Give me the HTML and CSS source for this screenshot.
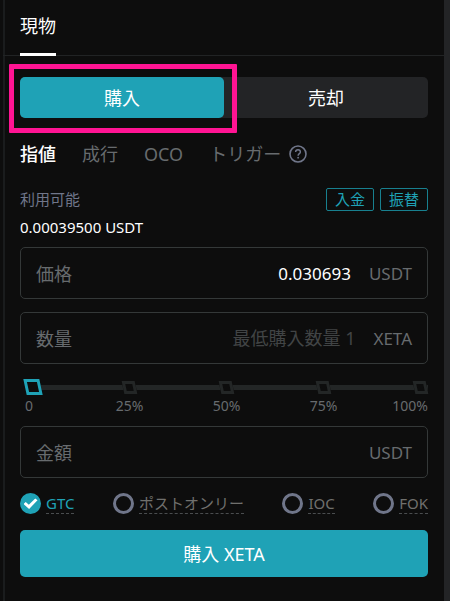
FILE: index.html
```html
<!DOCTYPE html>
<html lang="ja">
<head>
<meta charset="utf-8">
<meta name="viewport" content="width=device-width, initial-scale=1">
<title>現物</title>
<link rel="stylesheet" href="styles.css">
</head>
<body>
<main class="panel">
  <header class="panel-header">
    <h1 class="panel-title">現物</h1>
  </header>
  <form class="order">
    <div class="sides">
      <div class="side-slot">
        <button type="button" class="side side-buy">購入</button>
        <span class="highlight"></span>
      </div>
      <div class="side-slot">
        <button type="button" class="side">売却</button>
      </div>
    </div>

    <nav class="types">
      <button type="button" class="type type-active">指値</button>
      <button type="button" class="type">成行</button>
      <button type="button" class="type">OCO</button>
      <button type="button" class="type">トリガー</button>
      <button type="button" class="help" aria-label="ヘルプ">
        <svg class="help-icon" viewBox="0 0 18 18" fill="none" stroke="currentColor">
          <circle cx="9" cy="9" r="8" stroke-width="1.6"/>
          <path d="M6.6 7.1C6.6 5.6 7.6 4.7 9 4.7s2.4.9 2.4 2.2c0 1.7-2.3 1.8-2.3 3.8" stroke-width="1.4"/>
          <circle cx="9.1" cy="12.7" r=".9" fill="currentColor" stroke="none"/>
        </svg>
      </button>
    </nav>

    <div class="available">
      <span class="available-label">利用可能</span>
      <span class="available-actions">
        <button type="button" class="small-button">入金</button>
        <button type="button" class="small-button">振替</button>
      </span>
    </div>
    <p class="balance">0.00039500 USDT</p>

    <div class="field">
      <label class="field-label" for="price">価格</label>
      <input class="field-input" id="price" type="text" value="0.030693">
      <span class="field-unit">USDT</span>
    </div>
    <div class="field">
      <label class="field-label" for="quantity">数量</label>
      <input class="field-input" id="quantity" type="text" placeholder="最低購入数量 1">
      <span class="field-unit">XETA</span>
    </div>

    <div class="slider">
      <ul class="stops">
        <li class="stop"><i class="mark"></i><span class="stop-label">0</span></li>
        <li class="stop"><i class="mark"></i><span class="stop-label">25%</span></li>
        <li class="stop"><i class="mark"></i><span class="stop-label">50%</span></li>
        <li class="stop"><i class="mark"></i><span class="stop-label">75%</span></li>
        <li class="stop"><i class="mark"></i><span class="stop-label">100%</span></li>
      </ul>
      <input class="range" type="range" min="0" max="100" value="0" aria-label="数量の割合">
    </div>

    <div class="field">
      <label class="field-label" for="amount">金額</label>
      <input class="field-input" id="amount" type="text">
      <span class="field-unit">USDT</span>
    </div>

    <div class="options">
      <label class="option"><input class="radio" type="radio" name="tif" checked><span class="option-text">GTC</span></label>
      <label class="option"><input class="radio" type="radio" name="tif"><span class="option-text">ポストオンリー</span></label>
      <label class="option"><input class="radio" type="radio" name="tif"><span class="option-text">IOC</span></label>
      <label class="option"><input class="radio" type="radio" name="tif"><span class="option-text">FOK</span></label>
    </div>

    <button type="submit" class="submit">購入 XETA</button>
  </form>
</main>
</body>
</html>
```
FILE: styles.css
```css
:root {
  --bg: #0d0d0d;
  --surface: #232426;
  --line: #343838;
  --teal: #1fa2b6;
  --muted: #676b6e;
  --slate: #70768a;
}

* {
  box-sizing: border-box;
}

body {
  margin: 0;
  background: var(--surface);
  color: #fff;
  font-family: "Noto Sans", "Noto Sans CJK JP", sans-serif;
  font-size: 17px;
  line-height: 24px;
}

button,
input {
  margin: 0;
  padding: 0;
  border: 0;
  background: none;
  color: inherit;
  font: inherit;
}

.panel {
  min-height: 100vh;
  margin-right: 6px;
  border-left: 3px solid var(--bg);
  background: var(--bg);
  box-shadow: inset 2px 0 #1a1c1d;
}

.panel-header {
  display: flex;
  padding: 14px 16px 0 17px;
  border-bottom: 1px solid #212324;
}

.panel-title {
  margin: 0 0 -1px;
  padding-bottom: 15px;
  border-bottom: 3px solid #fff;
  font-size: 18px;
  font-weight: 400;
}

.order {
  display: flex;
  flex-direction: column;
  padding: 21px 16px 24px 17px;
}

.sides {
  display: grid;
  grid-template-columns: 1fr 1fr;
  border-radius: 5px;
  background: var(--surface);
}

.side-slot {
  position: relative;
}

.side {
  width: 100%;
  height: 41px;
  border-radius: 5px;
  font-size: 18px;
}

.side-buy {
  background: var(--teal);
}

.highlight {
  position: absolute;
  inset: -13px -13px -15px -11px;
  border: 5px solid #ff1493;
  border-radius: 1px;
  pointer-events: none;
}

.types {
  display: flex;
  align-items: center;
  gap: 26px;
  margin-top: 24px;
  color: var(--muted);
}

.type-active {
  color: #fff;
  font-weight: 500;
}

.type {
  font-size: 18px;
}

.help {
  display: flex;
  margin-left: -18px;
  color: var(--slate);
}

.help-icon {
  width: 18px;
  height: 18px;
}

.available {
  display: flex;
  align-items: center;
  justify-content: space-between;
  margin-top: 21px;
  color: var(--slate);
  font-size: 15px;
}

.available-actions {
  display: flex;
  gap: 6px;
}

.small-button {
  width: 48px;
  height: 23px;
  border: 1px solid #18808f;
  border-radius: 2px;
  color: var(--teal);
  line-height: 20px;
}

.balance {
  margin: 4px 0 8px;
  font-size: 15px;
}

.field {
  display: flex;
  align-items: center;
  height: 52px;
  padding: 2px 15px 0;
  border: 1px solid var(--line);
  border-radius: 5px;
  color: var(--muted);
}

.field + .field {
  margin-top: 13px;
}

.field-label {
  font-size: 18px;
}

.field-input {
  flex: 1;
  min-width: 0;
  padding: 0 18px;
  color: #fff;
  text-align: right;
}

.field-input::placeholder {
  color: #414445;
  font-size: 18px;
  opacity: 1;
}

.slider {
  display: grid;
  margin: 15px 0 10px;
}

.slider > * {
  grid-area: 1 / 1;
}

.stops {
  display: flex;
  justify-content: space-between;
  margin: 0;
  padding: 0 0 0 5px;
  list-style: none;
  color: var(--muted);
  font-size: 14px;
  line-height: 20px;
  background: linear-gradient(#232626, #232626) 10px 6px / 100% 5px no-repeat;
}

.stop {
  display: flex;
  flex-direction: column;
  align-items: center;
  gap: 2px;
  width: 15px;
}

.stop:first-child {
  align-items: flex-start;
}

.stop:last-child {
  align-items: flex-end;
}

.mark {
  width: 13px;
  height: 13px;
  margin: 2px 1px 0;
  border: 3px solid #232626;
  background: var(--bg);
  transform: skewX(12deg);
}

.range {
  width: 100%;
  height: 16px;
  padding: 0 0 0 5px;
  appearance: none;
  z-index: 1;
}

.range::-webkit-slider-thumb {
  width: 16px;
  height: 16px;
  appearance: none;
  border: 3px solid var(--teal);
  background: var(--bg);
  transform: skewX(12deg);
}

.options {
  display: flex;
  justify-content: space-between;
  margin: 15px 0 16px;
}

.option {
  display: flex;
  align-items: center;
  gap: 5px;
}

.radio {
  display: grid;
  place-items: center;
  width: 21px;
  height: 21px;
  appearance: none;
  border: 3px solid var(--slate);
  border-radius: 50%;
}

.radio:checked {
  border-color: var(--teal);
  background: var(--teal);
}

.radio:checked::before {
  content: "";
  width: 14px;
  height: 11px;
  background: #fff;
  clip-path: polygon(0 54%, 16% 37%, 38% 62%, 84% 4%, 100% 20%, 40% 100%);
}

.option-text {
  border-bottom: 1px dashed #4a4d4f;
  color: #70706d;
  font-size: 15px;
  line-height: 20px;
}

.radio:checked + .option-text {
  color: var(--teal);
}

.submit {
  height: 47px;
  border-radius: 5px;
  background: var(--teal);
  font-size: 18px;
}
```
